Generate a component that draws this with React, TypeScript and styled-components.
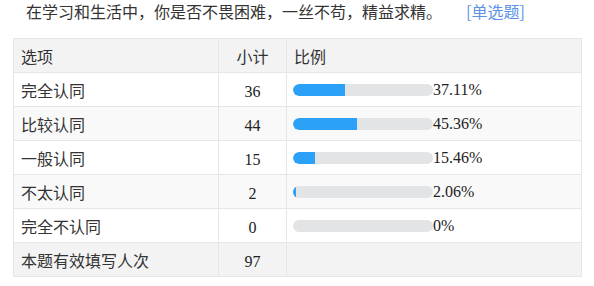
import React from 'react';
import styled, { createGlobalStyle } from 'styled-components';

interface Row {
  label: string;
  count: number;
  percent: number;
}

const rows: Row[] = [
  { label: '完全认同', count: 36, percent: 37.11 },
  { label: '比较认同', count: 44, percent: 45.36 },
  { label: '一般认同', count: 15, percent: 15.46 },
  { label: '不太认同', count: 2, percent: 2.06 },
  { label: '完全不认同', count: 0, percent: 0 },
];

const GlobalStyle = createGlobalStyle`
  body {
    margin: 0;
    background: #ffffff;
    font-family: "Noto Sans CJK SC", sans-serif;
  }
`;

const App: React.FC = () => {
  const total = rows.reduce((sum, r) => sum + r.count, 0);

  return (
    <Page>
      <GlobalStyle />
      <Title>
        在学习和生活中，你是否不畏困难，一丝不苟，精益求精。
        <TypeTag>[单选题]</TypeTag>
      </Title>
      <Table>
        <colgroup>
          <col style={{ width: 205 }} />
          <col style={{ width: 68 }} />
          <col />
        </colgroup>
        <thead>
          <HeadRow>
            <LabelCell>选项</LabelCell>
            <CountCell>小计</CountCell>
            <LabelCell>比例</LabelCell>
          </HeadRow>
        </thead>
        <tbody>
          {rows.map((r, i) => (
            <BodyRow key={r.label} $striped={i % 2 === 1}>
              <LabelCell>{r.label}</LabelCell>
              <CountCell>
                <Num>{r.count}</Num>
              </CountCell>
              <RatioCell>
                <Ratio>
                  <Track>
                    <Fill style={{ width: `${r.percent}%` }} />
                  </Track>
                  <Num>{r.percent}%</Num>
                </Ratio>
              </RatioCell>
            </BodyRow>
          ))}
          <FootRow>
            <LabelCell>本题有效填写人次</LabelCell>
            <CountCell>
              <Num>{total}</Num>
            </CountCell>
            <RatioCell />
          </FootRow>
        </tbody>
      </Table>
    </Page>
  );
};

export default App;

const Page = styled.div`
  padding: 0 12px 0 13px;
  color: #333333;
`;

const Title = styled.div`
  height: 22px;
  line-height: 22px;
  padding-left: 13px;
  font-size: 16px;
  color: #333333;
  white-space: nowrap;
`;

const TypeTag = styled.span`
  margin-left: 24px;
  color: #5b92e5;
`;

const Table = styled.table`
  margin-top: 16px;
  width: 569px;
  border-collapse: collapse;
  table-layout: fixed;
  font-size: 16px;
`;

const HeadRow = styled.tr`
  height: 34px;
  background: #f3f3f3;
`;

const BodyRow = styled.tr<{ $striped: boolean }>`
  height: 34px;
  background: ${p => (p.$striped ? '#f9f9f9' : '#ffffff')};
`;

const FootRow = styled.tr`
  height: 34px;
  background: #f3f3f3;
`;

const LabelCell = styled.td`
  border: 1px solid #e6e6e6;
  padding: 0 7px;
  text-align: left;
  font-weight: normal;
  color: #333333;
`;

const CountCell = styled.td`
  border: 1px solid #e6e6e6;
  padding: 0;
  text-align: center;
  color: #333333;
`;

const RatioCell = styled.td`
  border: 1px solid #e6e6e6;
  padding: 0 6px;
`;

const Ratio = styled.div`
  display: flex;
  align-items: center;
`;

const Track = styled.div`
  width: 140px;
  height: 12px;
  border-radius: 6px;
  background: #e3e4e6;
  overflow: hidden;
  flex-shrink: 0;
`;

const Fill = styled.div`
  height: 100%;
  background: #2ba1f7;
  border-radius: 6px 0 0 6px;
`;

const Num = styled.span`
  font-family: "Liberation Serif", serif;
  font-size: 16px;
  color: #222222;
`;
